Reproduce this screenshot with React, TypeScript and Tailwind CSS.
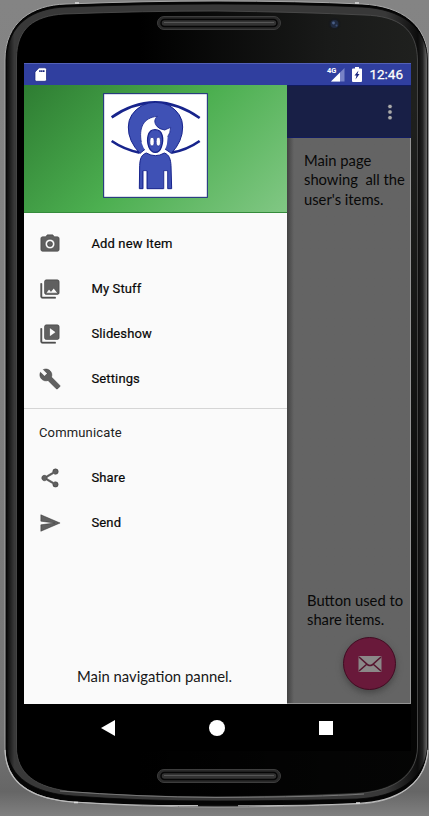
import React from "react";

function DeviceFrame() {
  return (
    <svg className="absolute inset-0" width="429" height="816" viewBox="0 0 429 816" fill="none">
      <defs>
        <linearGradient id="bg" x1="0" y1="0" x2="0" y2="816" gradientUnits="userSpaceOnUse">
          <stop offset="0" stopColor="#848484" />
          <stop offset=".45" stopColor="#808080" />
          <stop offset=".9" stopColor="#747474" />
          <stop offset=".97" stopColor="#666" />
          <stop offset="1" stopColor="#808080" />
        </linearGradient>
        <linearGradient id="face" x1="140" y1="0" x2="429" y2="0" gradientUnits="userSpaceOnUse">
          <stop offset="0" stopColor="#000" />
          <stop offset=".65" stopColor="#191a19" />
          <stop offset="1" stopColor="#20211f" />
        </linearGradient>
        <linearGradient id="fade" x1="0" y1="100" x2="0" y2="720" gradientUnits="userSpaceOnUse">
          <stop offset="0" stopColor="#000" stopOpacity="0" />
          <stop offset="1" stopColor="#000" stopOpacity=".85" />
        </linearGradient>
        <linearGradient id="rim" x1="5" y1="0" x2="428" y2="0" gradientUnits="userSpaceOnUse">
          <stop offset="0" stopColor="#080808" />
          <stop offset=".008" stopColor="#151515" />
          <stop offset=".022" stopColor="#393939" />
          <stop offset=".05" stopColor="#383838" />
          <stop offset=".9" stopColor="#383838" />
          <stop offset=".976" stopColor="#0c0c0c" />
          <stop offset=".987" stopColor="#222" />
          <stop offset="1" stopColor="#777" />
        </linearGradient>
      </defs>
      <rect width="429" height="816" fill="url(#bg)" />
      <path d="M5 60C5 22 32 5 66 4Q145 1 216 1Q300 1 362 4C402 6 428 25 428 60V748C426 785 396 803 357 804Q280 807 216 807Q140 807 73 802C32 799 5 783 5 748Z" fill="#050505" stroke="#a8a8a8" strokeWidth="1" />
      <path d="M6.500 60C7 24 33 8 66 7Q145 4 216 4Q300 4 362 7C401 9 427 27 427.500 60V747C425 781 395 797 357 799Q280 801 216 801Q140 801 73 796C34 793 8 778 7 747Z" fill="url(#rim)" stroke="#080808" strokeWidth=".8" />
      <path d="M16.500 58C17 28 34 16 64 14Q145 11 216 11Q300 12 364 15C399 16 417 29 417.500 60V747C417 780 387 793 350 794Q280 797 216 797Q140 797 75 792C34 788 17 773 16.500 747Z" fill="url(#face)" stroke="#505050" strokeWidth=".8" />
      <path d="M17 100H417V747C416 779 387 792 350 793Q280 796 216 796Q140 796 75 791C34 787 18 773 17 747Z" fill="url(#fade)" />
      <path d="M60 791Q140 797 216 797.500Q320 797 364 794" stroke="#777" strokeWidth="1" />
      <path d="M5 750C6 783 32 799 73 802Q140 806.500 216 805.500Q290 806.500 357 803.500C396 802 426 785 428 750" stroke="#bbb" strokeWidth="1.200" />
      <path d="M198 805.500H238" stroke="#111" strokeWidth="1.500" />
      <path d="M75 3h4M355 3h4M74 802.500h4M356 803h4" stroke="#ddd" strokeWidth="1.600" />
      {[16.5, 769.5].map((y) => (
        <g key={y}>
          <rect x="157.500" y={y} width="123" height="13" rx="6.500" fill="#292929" stroke="#3d3d3d" />
          <rect x="161" y={y + 3} width="116" height="7" rx="3.500" fill="#333" stroke="#060606" strokeWidth="1.500" />
          <path d={`M164 ${y + 6}H274`} stroke="#565656" />
        </g>
      ))}
      <circle cx="334.500" cy="24" r="6" fill="#17191c" />
      <circle cx="334.500" cy="24" r="4" fill="#202a40" />
      <circle cx="333.500" cy="23" r="1.400" fill="#4a6088" />
      <circle cx="336.500" cy="25.500" r="1" fill="#3a4e73" />
    </svg>
  );
}

function Logo() {
  return (
    <svg width="105" height="105" viewBox="24 24 315 315" className="block">
      <rect x="26" y="26" width="311" height="311" fill="#fff" stroke="#17247d" strokeWidth="3" />
      <g fill="none" stroke="#17248c" strokeWidth="8">
        <path d="M50 97Q112 53 181 52Q249 53 314 99" />
        <path d="M50 168Q88 194 134 203M314 168Q274 196 229 203" />
      </g>
      <path d="M142 61Q180 43 222 61Q263 86 263 126Q263 169 229 205L200 185H160L135 205Q99 168 100 126Q100 86 142 61Z" fill="#3f51b5" stroke="#17248c" strokeWidth="3" />
      <path d="M139 172C131 128 145 98 187 94C177 103 178 113 184 122Q192 133 209 135L227 127Q226 145 218 155L216 177Q212 194 202 202L225 214L205 221H158L136 214L156 202Q144 190 139 172Z" fill="#fff" />
      <path d="M139 172C131 128 145 98 187 94C177 103 178 113 184 122Q192 133 209 135L227 127Q226 145 218 155" fill="none" stroke="#17248c" strokeWidth="2.500" />
      <path d="M180 134C204 134 207 163 199 186C192 207 171 208 162 187C153 164 158 134 180 134Z" fill="#3f51b5" stroke="#17248c" strokeWidth="4" />
      <ellipse cx="171" cy="170" rx="6.500" ry="13" fill="#fff" stroke="#17248c" strokeWidth="2" />
      <ellipse cx="190" cy="170" rx="6.500" ry="13" fill="#fff" stroke="#17248c" strokeWidth="2" />
      <path d="M154 204Q181 220 208 204C223 209 227 223 228 242L230 311H218V258H206V311H156V258H144V311H133L134 242C135 221 139 209 154 204Z" fill="#3f51b5" stroke="#17248c" strokeWidth="3" strokeLinejoin="round" />
      <path d="M144.500 311V257H155.500V311M206.500 311V257H217.500V311" fill="#fff" stroke="#17248c" strokeWidth="2" />
    </svg>
  );
}

const icons = {
  camera: "M9 2 7.170 4H4c-1.100 0-2 .9-2 2v12c0 1.100.9 2 2 2h16c1.100 0 2-.9 2-2V6c0-1.100-.9-2-2-2h-3.170L15 2zm3 15.300a5.300 5.300 0 1 1 0-10.600 5.300 5.300 0 0 1 0 10.600zm0-2.500a2.800 2.800 0 1 0 0-5.600 2.800 2.800 0 0 0 0 5.600z",
  gallery: "M22 16V4c0-1.100-.9-2-2-2H8c-1.100 0-2 .9-2 2v12c0 1.100.9 2 2 2h12c1.100 0 2-.9 2-2zm-11-4 2.030 2.710L16 11l4.500 5.500H7.500zM1.800 6v14.200c0 1.100.9 2 2 2H18v-1.400H3.200V6z",
  slideshow: "M3.200 6H1.800v14.200c0 1.100.9 2 2 2H18v-1.400H3.200zM20 2H8c-1.100 0-2 .9-2 2v12c0 1.100.9 2 2 2h12c1.100 0 2-.9 2-2V4c0-1.100-.9-2-2-2zm-8.500 13V5l7 5z",
  settings: "M22.700 19l-9.100-9.100c.9-2.300.4-5-1.500-6.900-2-2-5-2.400-7.400-1.300L9 6 6 9 1.600 4.700C.4 7.100.9 10.100 2.900 12.100c1.900 1.900 4.600 2.400 6.900 1.500l9.100 9.100c.4.4 1 .4 1.400 0l2.300-2.300c.5-.4.5-1.100.1-1.400z",
  share: "M18 16.080c-.76 0-1.440.3-1.960.77L8.910 12.700c.05-.23.09-.46.09-.7s-.04-.47-.09-.7l7.050-4.110c.54.5 1.250.81 2.040.81a3 3 0 1 0-3-3c0 .24.04.47.09.7L8.040 9.810A3 3 0 1 0 6 15c.79 0 1.500-.31 2.040-.81l7.120 4.160c-.05.21-.08.43-.08.65a2.920 2.920 0 1 0 2.920-2.920z",
  send: "M2.010 21 23 12 2.010 3 2 10l15 2-15 2z",
};

function Row({ icon, label }: { icon: keyof typeof icons; label: string }) {
  return (
    <div className="flex h-[45px] items-center pl-[15px]">
      <svg width="22" height="22" viewBox="0 0 24 24" fill="#606060" stroke="#292929" strokeWidth=".5">
        <path d={icons[icon]} fillRule="evenodd" />
      </svg>
      <span className="ml-[30.500px] text-[13px] font-normal tracking-[.12px] text-[#080808] [-webkit-text-stroke:.2px_#080808]">{label}</span>
    </div>
  );
}

export default function App() {
  return (
    <div className="relative h-[816px] w-[429px] overflow-hidden bg-[#808080] font-['Roboto',sans-serif]">
      <DeviceFrame />
      <main className="relative ml-6 flex w-[387px] flex-col pt-[63px]">
        <header className="flex h-[22px] items-center border-t border-[#5361b8] bg-[#303f9f] pl-[10px] pr-[8px] text-white">
          <svg width="14" height="16" viewBox="0 0 14 16">
            <path d="M5 .8h6q1.500 0 1.500 1.500v10.500q0 1.500-1.500 1.500H2.500Q1 14.300 1 12.800V5z" fill="#fff" stroke="#142079" strokeWidth=".7" />
            <path d="M5.200 4.200h5.400" stroke="#142079" strokeWidth="1.800" strokeDasharray="1.500 .4" />
          </svg>
          <div className="ml-auto flex items-center">
            <span className="mb-[7px] text-[7.500px] font-bold leading-none">4G</span>
            <svg className="-ml-[5px] mr-[7px]" width="14" height="14" viewBox="0 0 14 14">
              <path d="M0 13.500 13.500 0v13.500z" fill="#7783c6" />
              <path d="M0 13.500 9 4.500v9z" fill="#fff" />
            </svg>
            <svg className="mr-[7px]" width="10" height="15" viewBox="0 0 10 15">
              <path d="M3 0h4v1.500h2q1 0 1 1V14q0 1-1 1H1q-1 0-1-1V2.500q0-1 1-1h2z" fill="#fff" />
              <path d="M6.500 3.500 2.500 8.500h2l-1 4 4-5.500h-2z" fill="#17237d" />
            </svg>
            <span className="text-[13.500px] font-normal leading-none [-webkit-text-stroke:.3px_white] [text-shadow:0_0_1px_#101b6c]">12:46</span>
          </div>
        </header>
        <div className="flex h-[619px]">
          <nav className="flex w-[263px] flex-col bg-[#fafafa]">
            <div className="flex h-[128px] items-start justify-center border-b border-[#348b3b] bg-[linear-gradient(135deg,#2e7d32,#4caf50_50%,#81c784)] pt-2">
              <Logo />
            </div>
            <div className="flex h-[196px] flex-col border-b border-[#d5d5d5] pt-[8px]">
              <Row icon="camera" label="Add new Item" />
              <Row icon="gallery" label="My Stuff" />
              <Row icon="slideshow" label="Slideshow" />
              <Row icon="settings" label="Settings" />
            </div>
            <div className="flex h-[46px] items-center pl-[15px] pt-px text-[13px] tracking-[.15px] text-[#222]">Communicate</div>
            <Row icon="share" label="Share" />
            <Row icon="send" label="Send" />
            <p className="mb-[18px] mt-auto pl-[53px] font-['Lato',sans-serif] text-[14.850px] leading-5 text-[#171717]">Main navigation pannel.</p>
          </nav>
          <section className="flex flex-1 flex-col border-b border-r border-[#949494] bg-[#646464] bg-linear-to-r from-[#424242] to-[#646464] to-[7px] font-['Lato',sans-serif] text-[14.750px] leading-[19.500px] text-[#080808]">
            <div className="-mr-px flex h-[53px] items-center justify-end border-y border-[#111b61] bg-[#181f46] pr-[17px]">
              <svg width="8" height="18" viewBox="0 0 8 18" fill="#aaa" stroke="#0c1239" strokeWidth=".7">
                <circle cx="4" cy="3.500" r="2.300" /><circle cx="4" cy="9" r="2.300" /><circle cx="4" cy="14.700" r="2.300" />
              </svg>
            </div>
            <p className="whitespace-pre pl-[17px] pt-[12.500px]">{"Main page\nshowing  all the\nuser's items."}</p>
            <p className="mt-auto whitespace-pre pl-[20px]">{"Button used to\nshare items."}</p>
            <div className="mb-[13px] ml-[56px] mt-[7.500px] flex size-[53px] items-center justify-center rounded-full border border-[#420b22] bg-[#69193a] shadow-[0_3px_6px_#3339]">
              <svg width="24" height="16" viewBox="0 0 24 16">
                <rect x=".5" width="23" height="16" rx="1" fill="#8b8888" />
                <path d="M1 1l9 8q2 1 4 0l9-8M1 15l8-7M23 15l-8-7" fill="none" stroke="#56152f" strokeWidth="1.600" />
              </svg>
            </div>
          </section>
        </div>
        <footer className="flex h-[47px] items-center bg-black pl-[77px]">
          <svg width="14" height="16" viewBox="0 0 14 16"><path d="M0 8 14 0v16z" fill="#fff" /></svg>
          <span className="ml-[94px] size-4 rounded-full bg-white" />
          <span className="ml-[94px] size-[14px] bg-white" />
        </footer>
      </main>
    </div>
  );
}
